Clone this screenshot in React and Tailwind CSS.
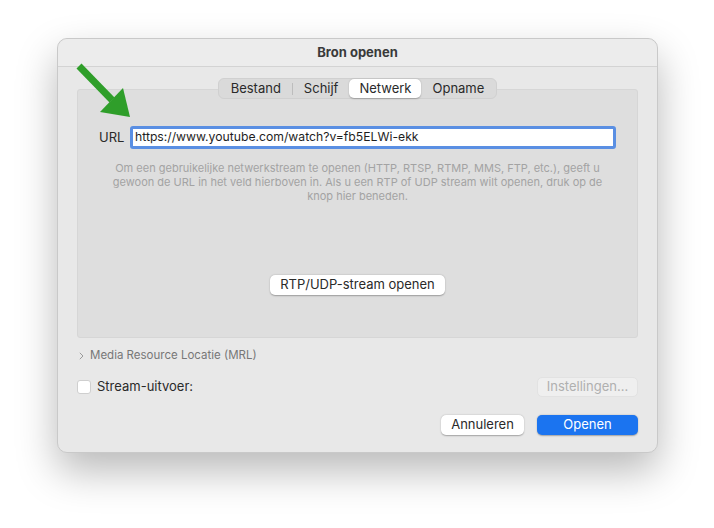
import React from 'react'

const tabs = ['Bestand', 'Schijf', 'Netwerk', 'Opname']

const Arrow = () => (
    <svg className="absolute left-0 top-0 pointer-events-none" width="714" height="528" viewBox="0 0 714 528">
        <line x1="79" y1="66" x2="112" y2="100" stroke="#2f9e2a" strokeWidth="7" strokeLinecap="butt" />
        <polygon points="130,117 100,112 123,88" fill="#2f9e2a" />
    </svg>
)

const App = () => {
    return (
        <div className="relative w-[714px] h-[528px] bg-white overflow-hidden" style={{ fontFamily: 'Inter, "Liberation Sans", sans-serif' }}>
            <div className="absolute left-[57px] top-[38px] w-[601px] h-[415px] rounded-[10px] bg-[#e8e8e8] border border-[#c9c9c9] shadow-[0_18px_40px_rgba(0,0,0,0.28)] flex flex-col">
                {/* title bar */}
                <div className="h-[28px] flex items-center justify-center border-b border-[#d3d3d3] bg-[#ececec] rounded-t-[10px] shrink-0">
                    <span className="text-[13px] font-bold text-[#3a3a3a]">Bron openen</span>
                </div>

                <div className="px-[19px] pt-[11px] flex flex-col">
                    {/* tabs */}
                    <div className="relative z-10 self-center flex items-center h-[21px] rounded-[6px] bg-[#dadada] border border-[#d0d0d0] px-[1px] text-[13px] text-[#2a2a2a]">
                        {tabs.map((t, i) => (
                            <div key={t} className="flex items-center h-full">
                                {i > 0 && t !== 'Netwerk' && tabs[i - 1] !== 'Netwerk' && (
                                    <div className="w-px h-[12px] bg-[#bdbdbd]" />
                                )}
                                <div
                                    className={
                                        t === 'Netwerk'
                                            ? 'h-[19px] flex items-center px-[10px] bg-white rounded-[5px] shadow-[0_0.5px_1.5px_rgba(0,0,0,0.25)]'
                                            : 'h-[19px] flex items-center px-[11px]'
                                    }
                                >
                                    {t}
                                </div>
                            </div>
                        ))}
                    </div>

                    {/* group box */}
                    <div className="mt-[-10px] h-[249px] bg-[#dedede] border border-[#d6d6d6] rounded-[3px] flex flex-col">
                        <div className="mt-[36px] flex items-center pl-[21px] pr-[21px]">
                            <span className="text-[13px] text-[#2a2a2a] w-[26px]">URL</span>
                            <div className="ml-[5px] flex-1 h-[23px] bg-white rounded-[3px] border-[3px] border-[#5a8fe3] flex items-center pl-[2px] text-[12.2px] text-[#1e1e1e]">
                                https://www.youtube.com/watch?v=fb5ELWi-ekk
                            </div>
                        </div>
                        <p className="mt-[12px] mx-auto w-[500px] text-center text-[11px] leading-[14px] text-[#a3a3a3]">
                            Om een gebruikelijke netwerkstream te openen (HTTP, RTSP, RTMP, MMS, FTP, etc.), geeft u gewoon de URL in het veld hierboven in. Als u een RTP of UDP stream wilt openen, druk op de knop hier beneden.
                        </p>
                        <div className="mt-[72px] self-center h-[20px] px-[10px] flex items-center bg-white rounded-[5px] shadow-[0_0.5px_1.5px_rgba(0,0,0,0.3)] text-[13px] text-[#2a2a2a]">
                            RTP/UDP-stream openen
                        </div>
                    </div>

                    {/* MRL */}
                    <div className="mt-[11px] flex items-center h-[14px] text-[11.5px] text-[#777]">
                        <svg className="ml-[2px] mr-[6px]" width="5" height="8" viewBox="0 0 5 8">
                            <path d="M0.8 0.8 L4 4 L0.8 7.2" fill="none" stroke="#9a9a9a" strokeWidth="1" />
                        </svg>
                        Media Resource Locatie (MRL)
                    </div>

                    {/* stream output */}
                    <div className="mt-[14px] flex items-center justify-between h-[20px]">
                        <div className="flex items-center">
                            <div className="w-[14px] h-[14px] bg-white rounded-[3px] border border-[#cfcfcf]" />
                            <span className="ml-[6px] text-[13px] text-[#2a2a2a]">Stream-uitvoer:</span>
                        </div>
                        <div className="w-[101px] h-[20px] flex items-center justify-center rounded-[5px] bg-[#efefef] border border-[#e2e2e2] text-[13px] text-[#b0b0b0]">
                            Instellingen...
                        </div>
                    </div>

                    {/* buttons */}
                    <div className="mt-[18px] flex justify-end gap-[13px]">
                        <div className="w-[83px] h-[20px] flex items-center justify-center bg-white rounded-[5px] shadow-[0_0.5px_1.5px_rgba(0,0,0,0.3)] text-[13px] text-[#2a2a2a]">
                            Annuleren
                        </div>
                        <div className="w-[101px] h-[20px] flex items-center justify-center bg-[#1b74f0] rounded-[5px] shadow-[0_0.5px_1.5px_rgba(0,0,0,0.3)] text-[13px] text-white">
                            Openen
                        </div>
                    </div>
                </div>
            </div>
            <Arrow />
        </div>
    )
}

export default App
